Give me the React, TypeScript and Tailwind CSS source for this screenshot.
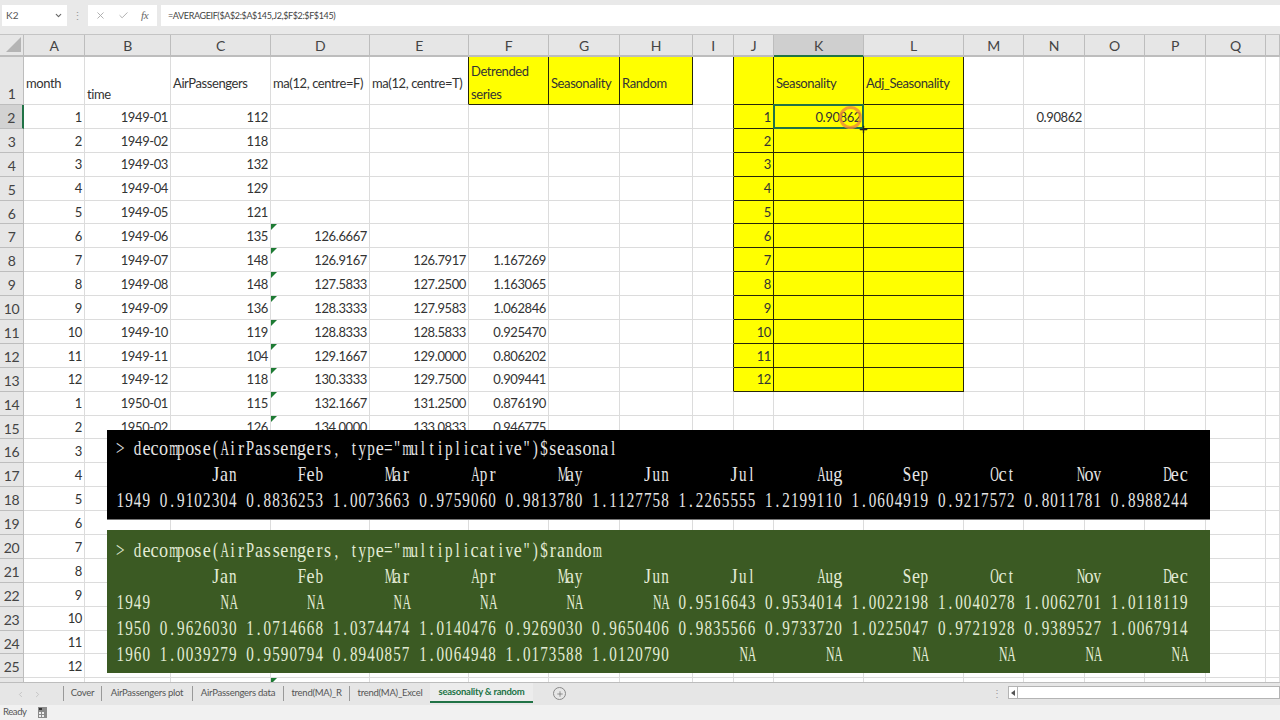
import { Check, ChevronDown, ChevronLeft, ChevronRight, Plus, X } from 'lucide-react';

const columns = ['A', 'B', 'C', 'D', 'E', 'F', 'G', 'H', 'I', 'J', 'K', 'L', 'M', 'N', 'O', 'P', 'Q', ''];
const tabs = [
    { name: 'Cover', width: 'w-[38px]' },
    { name: 'AirPassengers plot', width: 'w-[91px]' },
    { name: 'AirPassengers data', width: 'w-[91px]' },
    { name: 'trend(MA)_R', width: 'w-[66px]' },
    { name: 'trend(MA)_Excel', width: 'w-[81px]' },
];

const passengers = [112, 118, 132, 129, 121, 135, 148, 148, 136, 119, 104, 118, 115, 126];
const maF = ['126.6667', '126.9167', '127.5833', '128.3333', '128.8333', '129.1667', '130.3333', '132.1667', '134.0000'];
const maT = ['126.7917', '127.2500', '127.9583', '128.5833', '129.0000', '129.7500', '131.2500', '133.0833'];
const detrended = ['1.167269', '1.163065', '1.062846', '0.925470', '0.806202', '0.909441', '0.876190', '0.946775'];

const months = ['Jan', 'Feb', 'Mar', 'Apr', 'May', 'Jun', 'Jul', 'Aug', 'Sep', 'Oct', 'Nov', 'Dec'];
const na = ['NA', 'NA', 'NA', 'NA', 'NA', 'NA'];

// R prints a label of 4 chars, then 12 columns 9 chars wide
const tsLine = (label: string, vals: string[]) =>
    label.padEnd(4) + vals.map((v) => ' ' + v.padStart(9)).join('');

const seasonalLines = [
    '> decompose(AirPassengers, type="multiplicative")$seasonal',
    tsLine('', months),
    tsLine('1949', ['0.9102304', '0.8836253', '1.0073663', '0.9759060', '0.9813780', '1.1127758', '1.2265555', '1.2199110', '1.0604919', '0.9217572', '0.8011781', '0.8988244']),
];
const randomLines = [
    '> decompose(AirPassengers, type="multiplicative")$random',
    tsLine('', months),
    tsLine('1949', [...na, '0.9516643', '0.9534014', '1.0022198', '1.0040278', '1.0062701', '1.0118119']),
    tsLine('1950', ['0.9626030', '1.0714668', '1.0374474', '1.0140476', '0.9269030', '0.9650406', '0.9835566', '0.9733720', '1.0225047', '0.9721928', '0.9389527', '1.0067914']),
    tsLine('1960', ['1.0039279', '0.9590794', '0.8940857', '1.0064948', '1.0173588', '1.0120790', ...na]),
];

// serif glyphs in fixed cells, like the console font: wide letters squeezed, narrow ones stretched
const termCharClass = (c: string) => {
    if (/[mwMNADOQ]/.test(c)) return 'inline-block w-[12.6px] scale-x-[0.78] text-center';
    if (/[aceorszgJ]/.test(c)) return 'inline-block w-[12.6px] scale-x-[1.2] text-center';
    return 'inline-block w-[12.6px] text-center';
};

const TermLine = ({ text }: { text: string }) => (
    <div className="h-[26px] w-max origin-left scale-x-[0.6865] whitespace-pre font-['Liberation_Serif',serif] text-[22px] leading-[26px] tracking-normal">
        {[...text].map((c, i) => (
            <span key={i} className={termCharClass(c)}>
                {c === ' ' ? '\u00a0' : c}
            </span>
        ))}
    </div>
);

// text of a body cell; row is the sheet row, col the index in columns
const cellText = (row: number, col: number): string => {
    const i = row - 2;
    if (row > 25) return '';
    if (col === 0) return String((i % 12) + 1);
    if (col === 1 && i < 14) return `${1949 + Math.floor(i / 12)}-${String((i % 12) + 1).padStart(2, '0')}`;
    if (col === 2 && i < 14) return String(passengers[i]);
    if (col === 3 && i >= 5 && i < 14) return maF[i - 5];
    if (col === 4 && i >= 6 && i < 14) return maT[i - 6];
    if (col === 5 && i >= 6 && i < 14) return detrended[i - 6];
    if (col === 9 && i < 12) return String(i + 1);
    if (col === 10 && i === 0) return '0.90862';
    if (col === 13 && i === 0) return '0.90862';
    return '';
};

const bodyCellClass = (row: number, col: number) => {
    const yellow = row <= 13 && col >= 9 && col <= 11;
    if (yellow) return 'bg-[#ffff00] border-r border-b border-[#26260a]';
    if (row <= 13 && col === 8) return 'bg-white border-r border-b border-b-[#dcdcdc] border-r-[#26260a]';
    return 'bg-white border-r border-b border-[#dcdcdc]';
};

const headerRowOne = [
    { col: 0, label: 'month', className: 'bg-white items-center pt-[4px] border-[#dcdcdc]' },
    { col: 1, label: 'time', className: 'bg-white items-end border-[#dcdcdc]' },
    { col: 2, label: 'AirPassengers', className: 'bg-white items-center pt-[4px] border-[#dcdcdc]' },
    { col: 3, label: 'ma(12, centre=F)', className: 'bg-white items-center pt-[4px] border-[#dcdcdc]' },
    { col: 4, label: 'ma(12, centre=T)', className: 'bg-white items-center pt-[4px] border-b-[#dcdcdc] border-r-[#26260a]' },
    { col: 5, label: 'Detrended series', className: 'bg-[#ffff00] items-center pt-[4px] border-[#26260a]' },
    { col: 6, label: 'Seasonality', className: 'bg-[#ffff00] items-center pt-[4px] border-[#26260a]' },
    { col: 7, label: 'Random', className: 'bg-[#ffff00] items-center pt-[4px] border-[#26260a]' },
    { col: 8, label: '', className: 'bg-white border-b-[#dcdcdc] border-r-[#26260a]' },
    { col: 9, label: '', className: 'bg-[#ffff00] border-[#26260a]' },
    { col: 10, label: 'Seasonality', className: 'bg-[#ffff00] items-center pt-[4px] border-[#26260a]' },
    { col: 11, label: 'Adj_Seasonality', className: 'bg-[#ffff00] items-center pt-[4px] border-[#26260a]' },
];

export default function App() {
    const bodyRows = Array.from({ length: 25 }, (_, i) => i + 2);

    return (
        <div className="flex h-[720px] w-[1280px] flex-col overflow-hidden bg-[#e6e6e6] font-[Lato,sans-serif] text-[13px] tracking-[-0.4px] text-[#333]">
            {/* formula bar */}
            <div className="flex h-[35px] shrink-0 items-start gap-[4px] border-b border-[#c4c4c4] bg-[#e9e9e9] pl-[2px] pt-[5px]">
                <div className="flex h-[21px] w-[65px] items-center justify-between bg-white px-[4px] text-[10px] tracking-normal text-[#555]">
                    K2
                    <ChevronDown size={9} strokeWidth={3} className="text-[#666]" />
                </div>
                <div className="flex h-[21px] w-[13px] items-center justify-center text-[11px] leading-none text-[#999]">⋮</div>
                <div className="flex h-[21px] w-[69px] items-center gap-[12px] bg-white pl-[7px] text-[#aaa]">
                    <X size={11} />
                    <Check size={11} />
                    <span className="font-['Liberation_Serif',serif] text-[11px] italic text-[#666]">fx</span>
                </div>
                <div className="flex h-[21px] flex-1 items-center bg-white pl-[7px] text-[9px] tracking-[-0.37px] text-[#444]">
                    =AVERAGEIF($A$2:$A$145,J2,$F$2:$F$145)
                </div>
            </div>

            {/* sheet */}
            <div className="relative h-[647px] shrink-0 overflow-hidden bg-white">
                <div className="grid grid-cols-[24px_61px_86px_100px_99px_99px_80px_71px_73px_41px_40px_90px_100px_60px_61px_60px_61px_60px_14px] grid-rows-[22px_48px_repeat(25,23.9px)]">
                    {/* column headers */}
                    <div className="flex items-end justify-end border-r border-b-2 border-[#bdbdbd] bg-[#e6e6e6] pb-[3px] pr-[2px]">
                        <div className="h-0 w-0 border-b-[15px] border-l-[15px] border-b-[#b4b4b4] border-l-transparent" />
                    </div>
                    {columns.map((c) => (
                        <div
                            key={c}
                            className={
                                c === 'K'
                                    ? 'flex items-center justify-center border-r border-b-2 border-r-[#bdbdbd] border-b-[#217346] bg-[#cfcfcf] text-[14px] text-[#444]'
                                    : 'flex items-center justify-center border-r border-b-2 border-[#bdbdbd] bg-[#e6e6e6] text-[14px] text-[#444]'
                            }
                        >
                            {c}
                        </div>
                    ))}

                    {/* row 1 */}
                    <div className="flex items-end justify-center border-r border-b border-[#bdbdbd] bg-[#e6e6e6] text-[14px] leading-[20px] text-[#444]">1</div>
                    {columns.map((c, col) => {
                        const head = headerRowOne.find((h) => h.col === col);
                        return (
                            <div
                                key={c}
                                className={`flex overflow-visible whitespace-nowrap border-r border-b px-[2px] leading-[20px] ${head ? head.className : 'border-[#dcdcdc] bg-white'}`}
                            >
                                {col === 5 ? <span className="whitespace-normal leading-[23px]">Detrended series</span> : head?.label}
                            </div>
                        );
                    })}

                    {/* rows 2 to 26, only a sliver of 26 shows above the tabs */}
                    {bodyRows.map((row) => [
                        <div
                            key={`h${row}`}
                            className={
                                row === 2
                                    ? 'flex items-center justify-center border-r-2 border-b border-r-[#217346] border-b-[#bdbdbd] bg-[#d2d2d2] pt-[2px] text-[14px] text-[#444]'
                                    : 'flex items-center justify-center border-r border-b border-[#bdbdbd] bg-[#e6e6e6] pt-[2px] text-[14px] text-[#444]'
                            }
                        >
                            {row <= 25 ? row : ''}
                        </div>,
                        ...columns.map((c, col) => (
                            <div
                                key={`${row}${c}`}
                                className={`relative flex items-center justify-end pr-[2px] pt-[2px] ${bodyCellClass(row, col)}`}
                            >
                                {col === 3 && ((row >= 7 && row <= 15) || row === 26) && (
                                    <div className="absolute left-0 top-0 h-0 w-0 border-t-[6px] border-r-[6px] border-t-[#1e7b34] border-r-transparent" />
                                )}
                                {cellText(row, col)}
                            </div>
                        )),
                    ])}
                </div>

                {/* selected cell K2 with the pen circle and the cursor */}
                <div className="absolute left-[773px] top-[69px] h-[25px] w-[91px] border-2 border-[#217346]" />
                <div className="absolute left-[839px] top-[71px] h-[23px] w-[23px] rounded-full border-[3px] border-[#ee8a3a]/80" />
                <Plus size={11} strokeWidth={3} className="absolute left-[858px] top-[89px] text-[#222]" />

                {/* R console output pasted over the sheet */}
                <div className="absolute left-[107px] top-[395px] h-[90px] w-[1103px] overflow-hidden border-b border-[#777] bg-black pl-[9px] pt-[5px] text-[#e6e6e6]">
                    {seasonalLines.map((l, i) => (
                        <TermLine key={i} text={l} />
                    ))}
                </div>
                <div className="absolute left-[107px] top-[495px] h-[143px] w-[1103px] overflow-hidden bg-[#3b5a23] pl-[9px] pt-[7px] text-[#e3ecd6]">
                    {randomLines.map((l, i) => (
                        <TermLine key={i} text={l} />
                    ))}
                </div>
            </div>

            {/* sheet tabs */}
            <div className="flex h-[23px] shrink-0 items-start border-t border-[#bdbdbd] bg-[#e6e6e6] text-[9.5px] tracking-[-0.25px] text-[#555]">
                <div className="flex h-[22px] w-[63px] items-center justify-center gap-[8px] pr-[6px] text-[#bbb]">
                    <ChevronLeft size={9} />
                    <ChevronRight size={9} />
                </div>
                {tabs.map((t) => (
                    <div key={t.name} className={`mt-[3px] flex h-[15px] items-center justify-center border-l border-[#999] whitespace-nowrap ${t.width}`}>
                        {t.name}
                    </div>
                ))}
                <div className="flex h-[20px] w-[103px] items-center justify-center border-b-2 border-[#217346] bg-[#ececec] font-bold text-[#217346]">
                    seasonality &amp; random
                </div>
                <div className="ml-[20px] mt-[4px] flex h-[13px] w-[13px] items-center justify-center rounded-full border border-[#888]">
                    <Plus size={8} className="text-[#666]" />
                </div>
                <div className="ml-auto mt-[3px] flex items-center">
                    <span className="mr-[6px] text-[10px] leading-none text-[#999]">⋮</span>
                    <div className="flex h-[13px] w-[272px] items-center border border-[#b4b4b4] bg-white">
                        <div className="flex h-full w-[9px] items-center justify-center border-r border-[#b4b4b4]">
                            <div className="h-0 w-0 border-y-[3px] border-r-[4px] border-y-transparent border-r-[#555]" />
                        </div>
                    </div>
                </div>
            </div>

            {/* status bar */}
            <div className="flex h-[15px] shrink-0 items-center gap-[10px] bg-[#f1f1f1] pl-[3px] text-[9.5px] text-[#555]">
                Ready
                <svg width="9" height="11" viewBox="0 0 9 11" className="ml-[1px]">
                    <rect x="0" y="0" width="9" height="11" fill="#8a8a8a" />
                    <rect x="1" y="1" width="3" height="2" fill="#333" />
                    <rect x="1" y="5" width="2" height="2" fill="#eee" />
                    <rect x="4" y="5" width="2" height="2" fill="#eee" />
                    <rect x="1" y="8" width="2" height="2" fill="#eee" />
                    <rect x="4" y="8" width="2" height="2" fill="#eee" />
                </svg>
            </div>
        </div>
    );
}
